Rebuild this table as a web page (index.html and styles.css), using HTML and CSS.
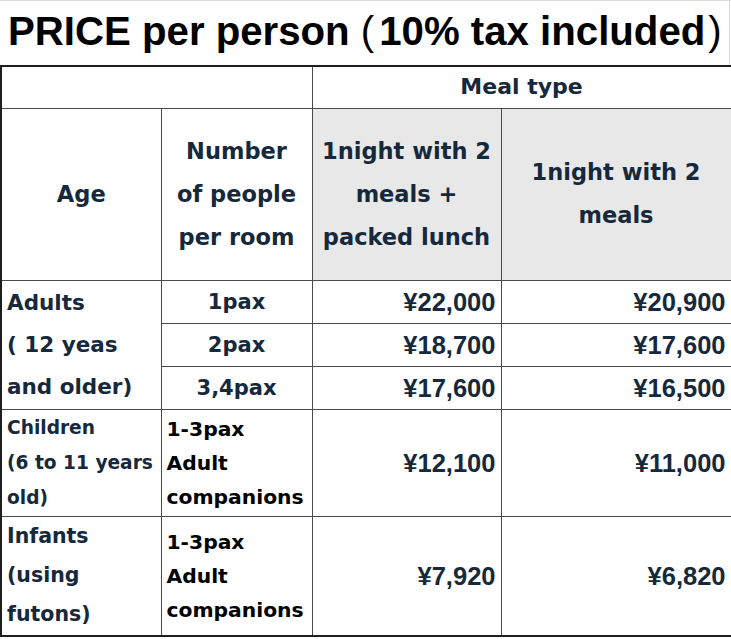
FILE: index.html
```html
<!DOCTYPE html>
<html lang="en">
<head>
<meta charset="utf-8">
<title>Price per person</title>
<link rel="stylesheet" href="styles.css">
</head>
<body>
<div class="page">
  <h1 class="title">PRICE per person <span class="paren open">(</span>10% tax included<span class="paren close">)</span></h1>
  <table class="price">
    <colgroup>
      <col class="c1"><col class="c2"><col class="c3"><col class="c4">
    </colgroup>
    <tr class="r-meal">
      <td colspan="2"></td>
      <td colspan="2" class="hd">Meal type</td>
    </tr>
    <tr class="r-head">
      <td class="hd">Age</td>
      <td class="hd">Number<br>of people<br>per room</td>
      <td class="hd gray">1night with 2<br>meals +<br>packed lunch</td>
      <td class="hd gray">1night with 2<br>meals</td>
    </tr>
    <tr class="r-std">
      <td rowspan="3" class="age adults">Adults<br>( 12 yeas<br>and older)</td>
      <td class="pax">1pax</td>
      <td class="yen">¥22,000</td>
      <td class="yen">¥20,900</td>
    </tr>
    <tr class="r-std">
      <td class="pax">2pax</td>
      <td class="yen">¥18,700</td>
      <td class="yen">¥17,600</td>
    </tr>
    <tr class="r-std">
      <td class="pax">3,4pax</td>
      <td class="yen">¥17,600</td>
      <td class="yen">¥16,500</td>
    </tr>
    <tr class="r-child">
      <td class="age children">Children<br>(6 to 11 years<br>old)</td>
      <td class="comp">1-3pax<br>Adult<br>companions</td>
      <td class="yen">¥12,100</td>
      <td class="yen">¥11,000</td>
    </tr>
    <tr class="r-infant">
      <td class="age infants">Infants<br>(using<br>futons)</td>
      <td class="comp">1-3pax<br>Adult<br>companions</td>
      <td class="yen">¥7,920</td>
      <td class="yen">¥6,820</td>
    </tr>
  </table>
</div>
</body>
</html>
```

FILE: styles.css
```css
html, body {
  margin: 0;
  padding: 0;
  background: #ffffff;
}

.page {
  width: 731px;
  height: 639px;
  overflow: hidden;
  box-sizing: border-box;
  border-top: 1px solid #dcdcdc;
}

.title {
  margin: 0;
  width: 730px;
  height: 64px;
  box-sizing: border-box;
  border-right: 1px solid #d8d8d8;
  padding-left: 8px;
  font-family: "Liberation Sans", Arial, sans-serif;
  font-weight: 700;
  font-size: 40.2px;
  line-height: 62px;
  color: #000000;
  white-space: nowrap;
  overflow: hidden;
}

.paren {
  font-weight: 400;
}

.paren.open {
  margin-right: 5px;
}

.paren.close {
  margin-left: 3px;
}

.price {
  width: 730px;
  table-layout: fixed;
  border-collapse: collapse;
  border: 2px solid #1e1e1e;
  border-right-width: 1px;
  font-family: "DejaVu Sans", sans-serif;
  font-weight: 700;
  color: #15283c;
}

.c1 { width: 160px; }
.c2 { width: 151px; }
.c3 { width: 189px; }
.c4 { width: 230px; }

.price td {
  border: 1px solid #4a4a4a;
  padding: 0 5px;
  vertical-align: middle;
  white-space: nowrap;
}

.r-meal { height: 42px; }
.r-head { height: 172px; }
.r-std { height: 43px; }
.r-child { height: 107px; }
.r-infant { height: 120px; }

.hd {
  text-align: center;
  font-size: 22.5px;
  line-height: 43px;
}

.r-meal .hd {
  font-size: 22px;
  line-height: 40px;
}

.gray {
  background: #e8e8e8;
}

.age {
  text-align: left;
}

.adults {
  font-size: 21.5px;
  line-height: 42px;
}

.children {
  font-size: 18.6px;
  line-height: 35px;
}

.infants {
  font-size: 20.5px;
  line-height: 39px;
}

.pax {
  text-align: center;
  font-size: 21px;
  line-height: 40px;
}

.comp {
  text-align: left;
  color: #000000;
  font-size: 20.3px;
  line-height: 34px;
}

.yen {
  text-align: right;
  font-family: "Liberation Sans", Arial, sans-serif;
  font-weight: 700;
  font-size: 25.5px;
  line-height: 40px;
}
```
